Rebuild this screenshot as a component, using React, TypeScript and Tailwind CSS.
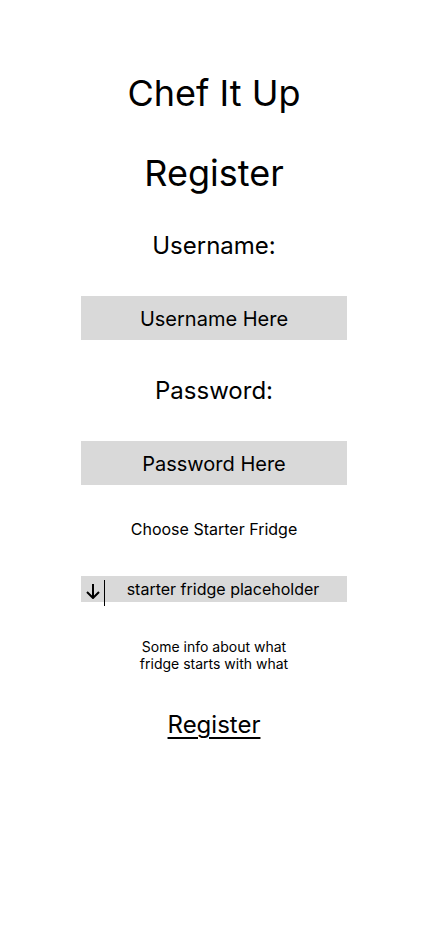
export default function App() {
  return (
    <div className="flex min-h-[926px] w-full flex-col items-center bg-white font-['Inter',sans-serif] text-black">
      <h1 className="mt-[71px] text-[36px] leading-[44px] font-normal">Chef It Up</h1>
      <h2 className="mt-[36px] text-[36px] leading-[44px] font-normal">Register</h2>

      <label className="mt-[36px] text-[24px] leading-[29px]">Username:</label>
      <div className="mt-[36px] flex h-[44px] w-[266px] items-center justify-center bg-[#d9d9d9] pt-[2px] text-[20px] leading-[24px]">
        Username Here
      </div>

      <label className="mt-[36px] text-[24px] leading-[29px]">Password:</label>
      <div className="mt-[36px] flex h-[44px] w-[266px] items-center justify-center bg-[#d9d9d9] pt-[2px] text-[20px] leading-[24px]">
        Password Here
      </div>

      <p className="mt-[35px] text-[16px] leading-[19px]">Choose Starter Fridge</p>

      <div className="mt-[37px] flex h-[26px] w-[266px] items-start bg-[#d9d9d9]">
        <div className="flex h-[26px] w-[23px] items-center justify-center pt-[3px]">
          <svg width="16" height="16" viewBox="0 0 16 16" fill="none" stroke="black" strokeWidth="2">
            <path d="M8 1v14" />
            <path d="M2 9l6 6 6-6" />
          </svg>
        </div>
        <div className="mt-[4px] h-[26px] w-px bg-black" />
        <div className="flex h-[26px] flex-1 items-center justify-center pr-[6px] text-[16px] leading-[19px]">
          starter fridge placeholder
        </div>
      </div>

      <p className="mt-[36px] text-center text-[14px] leading-[17px]">
        Some info about what
        <br />
        fridge starts with what
      </p>

      <a className="mt-[38px] text-[24px] leading-[29px] underline underline-offset-[4px]">Register</a>
    </div>
  );
}
